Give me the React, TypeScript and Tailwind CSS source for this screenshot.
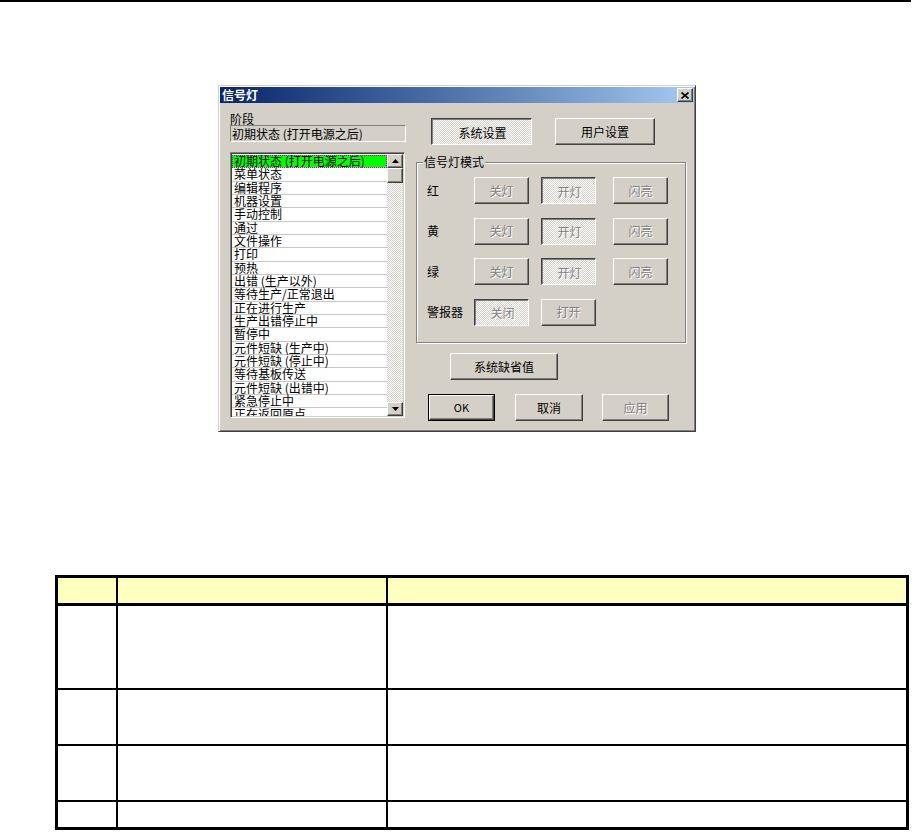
import type { ReactNode } from 'react'

const items = [
  '初期状态 (打开电源之后)',
  '菜单状态',
  '编辑程序',
  '机器设置',
  '手动控制',
  '通过',
  '文件操作',
  '打印',
  '预热',
  '出错 (生产以外)',
  '等待生产/正常退出',
  '正在进行生产',
  '生产出错停止中',
  '暂停中',
  '元件短缺 (生产中)',
  '元件短缺 (停止中)',
  '等待基板传送',
  '元件短缺 (出错中)',
  '紧急停止中',
  '正在返回原点',
]

const raised =
  'border border-t-white border-l-white border-r-[#404040] border-b-[#404040] shadow-[inset_-1px_-1px_0_#808080] bg-[#d4d0c8]'
const sunk =
  'border border-t-[#404040] border-l-[#404040] border-r-white border-b-white shadow-[inset_1px_1px_0_#808080] bg-[#d4d0c8] bg-[image:repeating-conic-gradient(#ffffff_0%_25%,#d4d0c8_0%_50%)] bg-[length:2px_2px]'
const grayText = 'text-[#808080] [text-shadow:1px_1px_0_#ffffff]'

function Btn({
  children,
  className = '',
  pressed = false,
  disabled = false,
}: {
  children: ReactNode
  className?: string
  pressed?: boolean
  disabled?: boolean
}) {
  return (
    <div
      className={`flex h-[27px] shrink-0 items-center justify-center text-[12px] leading-none ${
        pressed ? sunk + ' pt-[2px] pl-[2px]' : raised
      } ${disabled ? grayText : 'text-black'} ${className}`}
    >
      {children}
    </div>
  )
}

function LampRow({ label, alarm = false }: { label: string; alarm?: boolean }) {
  return (
    <div className="flex h-[27px] items-center pl-[10px]">
      <span className="w-[47px] text-[12px] leading-none">{label}</span>
      {alarm ? (
        <>
          <Btn pressed disabled className="w-[55px]">
            关闭
          </Btn>
          <Btn disabled className="ml-[12px] w-[55px]">
            打开
          </Btn>
        </>
      ) : (
        <>
          <Btn disabled className="w-[55px]">
            关灯
          </Btn>
          <Btn pressed disabled className="ml-[12px] w-[55px]">
            开灯
          </Btn>
          <Btn disabled className="ml-[17px] w-[55px]">
            闪亮
          </Btn>
        </>
      )}
    </div>
  )
}

function Arrow({ up }: { up?: boolean }) {
  return (
    <div className={`flex h-[14px] w-[16px] items-center justify-center ${raised}`}>
      <svg width="7" height="4" viewBox="0 0 7 4">
        <polygon points={up ? '3.5,0 7,4 0,4' : '0,0 7,0 3.5,4'} fill="#000" />
      </svg>
    </div>
  )
}

function Dialog() {
  return (
    <div className="ml-[218px] flex h-[347px] w-[478px] flex-col border border-t-[#d4d0c8] border-l-[#d4d0c8] border-r-[#404040] border-b-[#404040] bg-[#d4d0c8] p-[1px] shadow-[inset_1px_1px_0_#ffffff,inset_-1px_-1px_0_#808080]">
      <div className="flex h-[16px] items-center justify-between bg-linear-to-r from-[#0a246a] to-[#a6caf0] pl-[2px] pr-[1px]">
        <span className="text-[12px] font-bold leading-none text-white">信号灯</span>
        <div className={`flex h-[14px] w-[16px] items-center justify-center ${raised}`}>
          <svg width="8" height="7" viewBox="0 0 8 7">
            <path d="M0.5 0.5 L7.5 6.5 M7.5 0.5 L0.5 6.5" stroke="#000" strokeWidth="1.6" />
          </svg>
        </div>
      </div>

      <div className="flex flex-1">
        {/* left column */}
        <div className="ml-[10px] flex w-[176px] flex-col">
          <div className="mt-[10px] h-[12px] text-[12px] leading-[12px]">阶段</div>
          <div className="flex h-[17px] items-center border border-t-[#808080] border-l-[#808080] border-r-white border-b-white pl-[1px] text-[12px] leading-none">
            初期状态 (打开电源之后)
          </div>
          <div className="mt-[10px] flex h-[266px] w-[175px] border border-t-[#808080] border-l-[#808080] border-r-white border-b-white shadow-[inset_1px_1px_0_#404040,inset_-1px_-1px_0_#d4d0c8] p-[1px]">
            <div className="flex flex-1 flex-col overflow-hidden bg-white pt-[1px]">
              {items.map((it, i) => (
                <div
                  key={it}
                  className={`h-[13.33px] shrink-0 border-b border-[#c8c8c8] pl-[2px] text-[12px] leading-[12px] whitespace-nowrap ${
                    i === 0
                      ? 'bg-[#00ff00] outline-1 -outline-offset-1 outline-dotted outline-[#c000c0]'
                      : ''
                  }`}
                >
                  {it}
                </div>
              ))}
            </div>
            <div className="flex w-[16px] flex-col bg-[image:repeating-conic-gradient(#d4d0c8_0%_25%,#ffffff_0%_50%)] bg-[length:2px_2px]">
              <Arrow up />
              <div className={`h-[15px] w-[16px] ${raised}`} />
              <div className="flex-1" />
              <Arrow />
            </div>
          </div>
        </div>

        {/* right column */}
        <div className="ml-[10px] flex w-[270px] flex-col">
          <div className="mt-[15px] flex">
            <Btn pressed className="ml-[15px] w-[101px]">
              系统设置
            </Btn>
            <Btn className="ml-[23px] w-[100px]">用户设置</Btn>
          </div>

          <div className="relative mt-[17px] h-[181px] border border-[#808080] shadow-[1px_1px_0_#ffffff,inset_1px_1px_0_#ffffff]">
            <span className="absolute -top-[7px] left-[6px] bg-[#d4d0c8] px-[1px] text-[12px] leading-[12px]">
              信号灯模式
            </span>
            <div className="flex flex-col gap-[13.5px] pt-[14px]">
              <LampRow label="红" />
              <LampRow label="黄" />
              <LampRow label="绿" />
              <LampRow label="警报器" alarm />
            </div>
          </div>

          <Btn className="ml-[34px] mt-[10px] w-[108px]">系统缺省值</Btn>

          <div className="mt-[14px] flex">
            <div className="ml-[12px] border border-black">
              <div className={`flex h-[25px] w-[65px] items-center justify-center text-[11px] leading-none ${raised}`}>
                OK
              </div>
            </div>
            <Btn className="ml-[20px] w-[68px]">取消</Btn>
            <Btn disabled className="ml-[19px] w-[67px]">
              应用
            </Btn>
          </div>
        </div>
      </div>
    </div>
  )
}

function Table() {
  const rowH = ['h-[84px]', 'h-[56px]', 'h-[56px]', 'h-[25px]']
  return (
    <div className="ml-[55px] mt-[143px] w-[854px] border-[3px] border-black">
      <div className="grid grid-cols-[58px_270px_1fr] bg-[#ffffc0]">
        <div className="h-[28px] border-b-[3px] border-black" />
        <div className="h-[28px] border-b-[3px] border-l-2 border-black" />
        <div className="h-[28px] border-b-[3px] border-l-2 border-black" />
      </div>
      {rowH.map((h, i) => (
        <div key={i} className="grid grid-cols-[58px_270px_1fr] bg-white">
          <div className={`${h} ${i < 3 ? 'border-b-2' : ''} border-black`} />
          <div className={`${h} ${i < 3 ? 'border-b-2' : ''} border-l-2 border-black`} />
          <div className={`${h} ${i < 3 ? 'border-b-2' : ''} border-l-2 border-black`} />
        </div>
      ))}
    </div>
  )
}

export default function App() {
  return (
    <div className="min-h-[832px] w-[913px] bg-white font-['Noto_Sans_CJK_SC',sans-serif] text-black">
      <div className="h-[2px] w-[911px] bg-black" />
      <div className="mt-[83px]">
        <Dialog />
      </div>
      <Table />
    </div>
  )
}
